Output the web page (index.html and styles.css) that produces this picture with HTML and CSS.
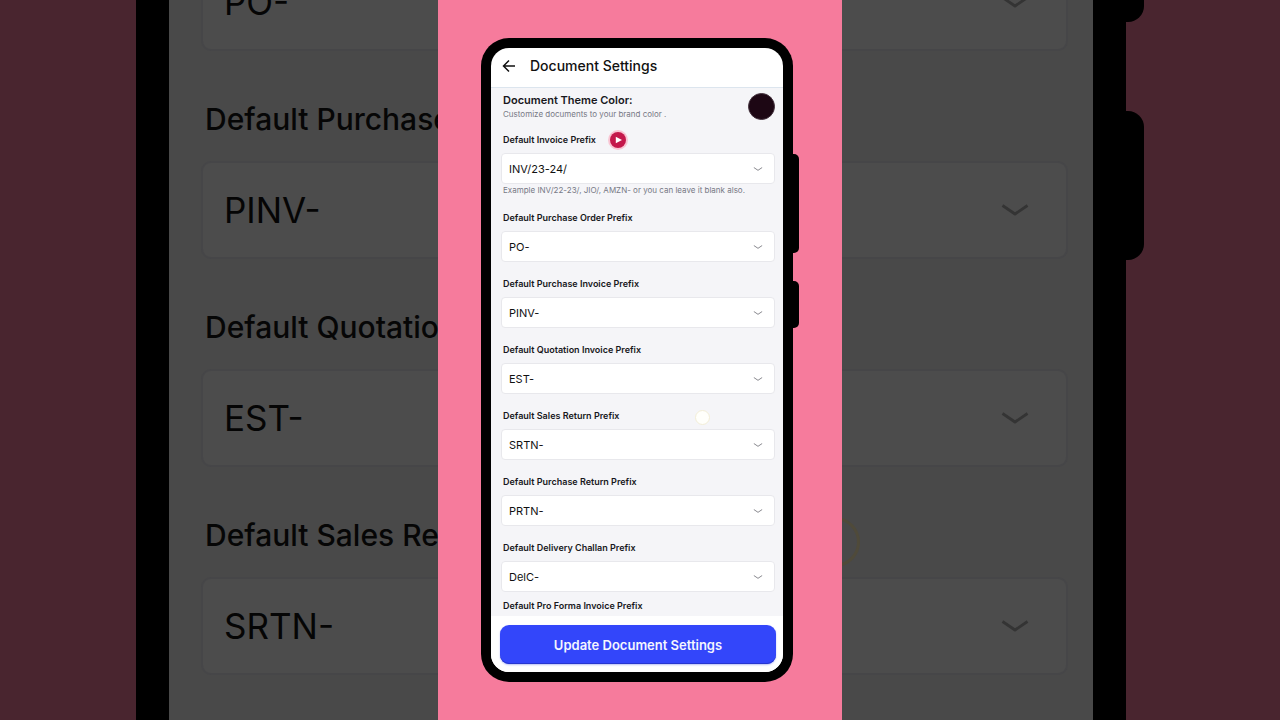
FILE: index.html
```html
<!DOCTYPE html>
<html lang="en">
<head>
<meta charset="utf-8">
<meta name="viewport" content="width=device-width, initial-scale=1">
<title>Document Settings</title>
<link rel="stylesheet" href="styles.css">
</head>
<body>
<svg class="defs" aria-hidden="true">
  <symbol id="chevron" viewBox="0 0 28 12"><path d="M1.5 1.5 14 10 26.500 1.500" fill="none" stroke="currentColor" stroke-width="2.800" stroke-linejoin="round"/></symbol>
</svg>
<div class="stage">
  <div class="backdrop" aria-hidden="true">
    <div class="big-phone">
      <span class="big-key big-key-top"></span>
      <span class="big-key big-key-low"></span>
      <div class="big-field">
        <div class="big-box"><select class="big-select" tabindex="-1" aria-label="Default Purchase Order Prefix"><option>PO-</option></select><svg class="big-chevron"><use href="#chevron"/></svg></div>
      </div>
      <div class="big-field">
        <label class="big-label" for="b-pinv">Default Purchase Invoice Prefix</label>
        <div class="big-box"><select id="b-pinv" class="big-select" tabindex="-1"><option>PINV-</option></select><svg class="big-chevron"><use href="#chevron"/></svg></div>
      </div>
      <div class="big-field">
        <label class="big-label" for="b-est">Default Quotation Invoice Prefix</label>
        <div class="big-box"><select id="b-est" class="big-select" tabindex="-1"><option>EST-</option></select><svg class="big-chevron"><use href="#chevron"/></svg></div>
      </div>
      <div class="big-field">
        <span class="big-touch"></span>
        <label class="big-label" for="b-srtn">Default Sales Return Prefix</label>
        <div class="big-box"><select id="b-srtn" class="big-select" tabindex="-1"><option>SRTN-</option></select><svg class="big-chevron"><use href="#chevron"/></svg></div>
      </div>
    </div>
  </div>
  <main class="panel">
    <div class="phone">
      <span class="key key-top"></span>
      <span class="key key-low"></span>
      <div class="screen">
        <header class="bar">
          <button class="back" type="button" aria-label="Back">
            <svg class="back-icon" viewBox="0 0 14 14"><path d="M13 7H1.500M7 1.500 1.500 7 7 12.500" fill="none" stroke="currentColor" stroke-width="1.500"/></svg>
          </button>
          <h1 class="title">Document Settings</h1>
        </header>
        <form class="form" id="settings">
          <div class="theme">
            <div>
              <h2 class="theme-title">Document Theme Color:</h2>
              <p class="note">Customize documents to your brand color .</p>
            </div>
            <button class="swatch" type="button" aria-label="Theme color"></button>
          </div>
          <div class="field">
            <div class="label-row">
              <label class="label" for="inv">Default Invoice Prefix</label>
              <button class="play" type="button" aria-label="Play help video"><svg class="play-icon" viewBox="0 0 20 20"><circle cx="10" cy="10" r="10" fill="#f9c5d3"/><circle cx="10" cy="10" r="8" fill="#c4184b"/><path d="M7.800 6.800 14 10 7.800 13.200Z" fill="#fff"/></svg></button>
            </div>
            <div class="box"><select id="inv" class="select"><option>INV/23-24/</option></select><svg class="chevron"><use href="#chevron"/></svg></div>
            <p class="note hint">Example INV/22-23/, JIO/, AMZN- or you can leave it blank also.</p>
          </div>
          <div class="field">
            <label class="label" for="po">Default Purchase Order Prefix</label>
            <div class="box"><select id="po" class="select"><option>PO-</option></select><svg class="chevron"><use href="#chevron"/></svg></div>
          </div>
          <div class="field">
            <label class="label" for="pinv">Default Purchase Invoice Prefix</label>
            <div class="box"><select id="pinv" class="select"><option>PINV-</option></select><svg class="chevron"><use href="#chevron"/></svg></div>
          </div>
          <div class="field">
            <label class="label" for="est">Default Quotation Invoice Prefix</label>
            <div class="box"><select id="est" class="select"><option>EST-</option></select><svg class="chevron"><use href="#chevron"/></svg></div>
          </div>
          <div class="field">
            <span class="touch"></span>
            <label class="label" for="srtn">Default Sales Return Prefix</label>
            <div class="box"><select id="srtn" class="select"><option>SRTN-</option></select><svg class="chevron"><use href="#chevron"/></svg></div>
          </div>
          <div class="field">
            <label class="label" for="prtn">Default Purchase Return Prefix</label>
            <div class="box"><select id="prtn" class="select"><option>PRTN-</option></select><svg class="chevron"><use href="#chevron"/></svg></div>
          </div>
          <div class="field field-tight">
            <label class="label" for="delc">Default Delivery Challan Prefix</label>
            <div class="box"><select id="delc" class="select"><option>DelC-</option></select><svg class="chevron"><use href="#chevron"/></svg></div>
          </div>
          <p class="label last-label">Default Pro Forma Invoice Prefix</p>
        </form>
        <footer class="footer">
          <button class="submit" type="submit" form="settings">Update Document Settings</button>
        </footer>
      </div>
    </div>
  </main>
</div>
</body>
</html>
```
FILE: styles.css
```css
* { box-sizing: border-box; }
body { margin: 0; font-family: Inter, "Liberation Sans", sans-serif; background: #49252f; }
h1, h2, p { margin: 0; }
button { padding: 0; border: 0; font-family: inherit; }
.defs { position: absolute; width: 0; height: 0; }

.stage { position: relative; min-height: 100vh; display: flex; justify-content: center; overflow: hidden; }

/* Dimmed enlarged copy behind the main panel */
.backdrop { position: absolute; inset: 0; overflow: hidden; display: flex; justify-content: center; padding-right: 18px; }
.big-phone { position: relative; flex: 0 0 990px; border: solid #000; border-width: 0 33px; background: #494949; padding: 0 25px 0 32px; display: flex; flex-direction: column; gap: 48px; }
.big-field { position: relative; display: flex; flex-direction: column; gap: 22px; }
.big-field:first-of-type { margin-top: -47px; }
.big-label { padding-left: 4px; font-size: 30px; line-height: 40px; font-weight: 500; color: #060606; }
.big-box { display: grid; align-items: center; }
.big-select { grid-area: 1 / 1; width: 100%; height: 98px; padding: 0 21px; border: 2px solid #464648; border-radius: 10px; background: #4c4c4c; color: #050505; font: 400 35px/42px Inter, sans-serif; appearance: none; }
.big-chevron { grid-area: 1 / 1; justify-self: end; margin-right: 39px; width: 28px; height: 12px; color: #343434; pointer-events: none; }
.big-key { position: absolute; left: 100%; margin-left: 33px; width: 18px; background: #000; border-radius: 0 16px 16px 0; }
.big-key-top { top: 0; height: 22px; border-radius: 0 0 16px 0; }
.big-key-low { top: 111px; height: 149px; }
.big-touch { position: absolute; right: 208px; top: 2px; width: 50px; height: 50px; border: 3px solid #4f4a3a; border-radius: 50%; }

.panel { position: relative; width: 404px; max-width: 100%; padding: 38px 49px 38px 43px; background: #f67b9c; }
.phone { position: relative; padding: 10px; background: #000; border-radius: 28px; }
.key { position: absolute; left: 100%; width: 6px; background: #000; border-radius: 0 5px 5px 0; }
.key-top { top: 116px; height: 99px; }
.key-low { top: 243px; height: 47px; }
.screen { border-radius: 18px; overflow: hidden; background: #fff; }

.bar { display: flex; align-items: center; gap: 14px; padding: 8px 11px 11px; border-bottom: 1px solid #dce5ee; }
.back { width: 14px; height: 14px; background: none; color: #111; }
.back-icon { display: block; width: 14px; height: 14px; }
.title { font-size: 14px; line-height: 20px; font-weight: 500; color: #111; }

.form { padding: 4px 8px 3px 10px; background: #f5f5f8; }
.theme { display: flex; justify-content: space-between; align-items: center; height: 28px; padding-left: 2px; margin-bottom: 13px; }
.theme-title { font-size: 11px; line-height: 15px; font-weight: 600; color: #18181c; }
.note { font-size: 8px; line-height: 12px; color: #777985; }
.swatch { width: 27px; height: 27px; border-radius: 50%; background: #1d0714; border: 1px solid #43313d; }

.field { position: relative; display: flex; flex-direction: column; gap: 6px; margin-bottom: 15px; }
.field-tight { margin-bottom: 7px; }
.label-row { display: flex; align-items: center; gap: 12px; height: 14px; }
.label { padding-left: 2px; font-size: 9px; line-height: 14px; font-weight: 600; color: #18181c; }
.play { width: 20px; height: 20px; background: none; }
.play-icon { display: block; width: 20px; height: 20px; }
.box { display: grid; align-items: center; }
.select { grid-area: 1 / 1; width: 100%; height: 31px; padding: 0 7px; border: 1px solid #e8e8ec; border-radius: 4px; background: #fff; color: #111; font: 400 11px/14px Inter, sans-serif; appearance: none; }
.chevron { grid-area: 1 / 1; justify-self: end; margin-right: 12px; width: 10px; height: 4px; color: #808086; pointer-events: none; }
.hint { margin-top: -6px; padding-left: 2px; }
.touch { position: absolute; right: 65px; top: 1px; width: 15px; height: 15px; border: 1px solid #f3eed7; border-radius: 50%; background: #fffffb; }

.footer { padding: 9px 7px 8px 9px; background: #fff; }
.submit { display: block; width: 100%; height: 39px; border-radius: 9px; background: #3346fa; color: #f4f5ff; font-size: 13px; line-height: 20px; font-weight: 600; box-shadow: inset 0 -1px 0 #2636cf, 0 1px 2px #b9bff5; }
```
